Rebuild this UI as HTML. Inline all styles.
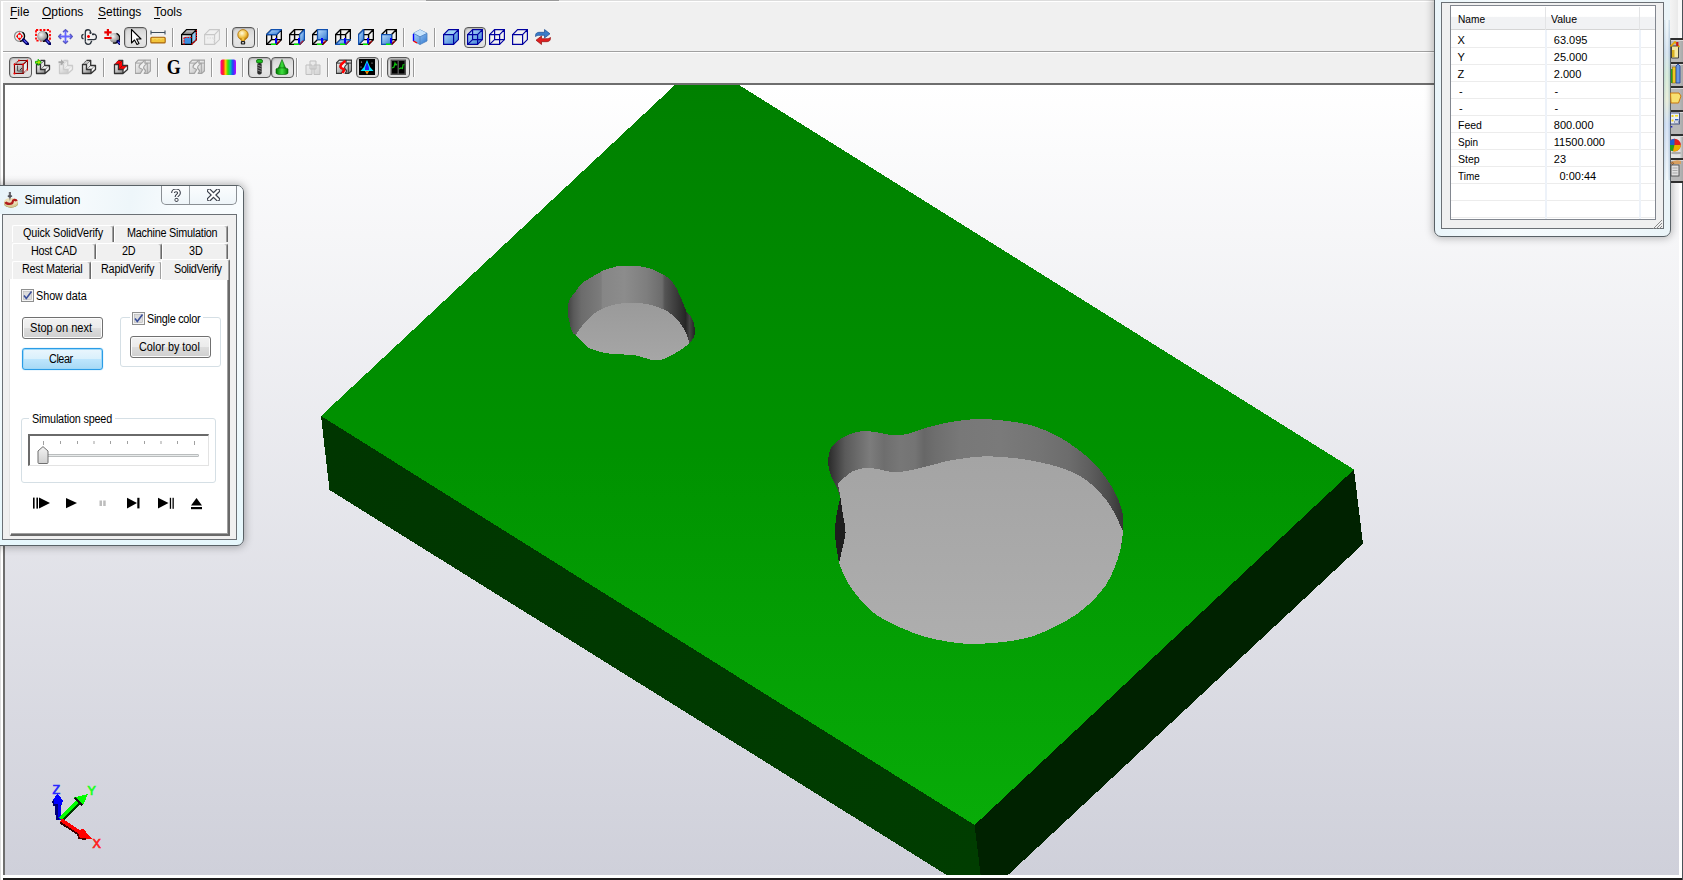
<!DOCTYPE html>
<html><head><meta charset="utf-8">
<style>
*{margin:0;padding:0;box-sizing:border-box}
html,body{width:1683px;height:880px;overflow:hidden;background:#f0f0f0;font-family:"Liberation Sans",sans-serif;color:#000;position:relative}
.a{position:absolute;display:block}
.t{position:absolute;white-space:nowrap;font-size:12px;line-height:14px}
u{text-decoration:none;border-bottom:1px solid #000;display:inline-block;line-height:11px}
</style></head><body>
<div class="a" style="left:0px;top:0px;width:1683px;height:1px;background:#dcdcdc"></div><div class="a" style="left:426px;top:0px;width:133px;height:1px;background:#9a9a9a"></div><div class="a" style="left:0px;top:0px;width:1px;height:880px;background:#dcdcdc"></div><div class="a" style="left:1px;top:1px;width:1682px;height:1px;background:#fff"></div><div class="a" style="left:1px;top:1px;width:2px;height:880px;background:#fff"></div><div class="t" style="left:10px;top:5px;font-size:12px;line-height:14px"><span style="text-decoration:underline;text-underline-offset:2px">F</span>ile</div><div class="t" style="left:42px;top:5px;font-size:12px;line-height:14px"><span style="text-decoration:underline;text-underline-offset:2px">O</span>ptions</div><div class="t" style="left:98px;top:5px;font-size:12px;line-height:14px"><span style="text-decoration:underline;text-underline-offset:2px">S</span>ettings</div><div class="t" style="left:154px;top:5px;font-size:12px;line-height:14px"><span style="text-decoration:underline;text-underline-offset:2px">T</span>ools</div><div class="a" style="left:3px;top:51px;width:1680px;height:1px;background:#a0a0a0"></div><div class="a" style="left:3px;top:52px;width:1680px;height:1px;background:#fff"></div><div class="a" style="left:3px;top:83px;width:1680px;height:797px;background:#1c1c1c">
 <div class="a" style="left:0;top:0;width:1679px;height:795px;background:#fff"></div>
 <div class="a" style="left:0;top:0;width:1676px;height:792px;background:#6e6e6e"></div>
 <div class="a" style="left:2px;top:2px;width:1674px;height:790px;background:linear-gradient(#ffffff,#cfd0da);overflow:hidden">
  <svg width="1674" height="790" viewBox="5 85 1674 790" style="position:absolute;left:0;top:0" shape-rendering="crispEdges">
   <defs>
    <linearGradient id="gt" gradientUnits="userSpaceOnUse" x1="0" y1="85" x2="0" y2="825">
     <stop offset="0" stop-color="#008000"/><stop offset="0.5" stop-color="#009200"/><stop offset="1" stop-color="#08ac08"/>
    </linearGradient>
    <linearGradient id="gl" gradientUnits="userSpaceOnUse" x1="330" y1="450" x2="980" y2="860">
     <stop offset="0" stop-color="#003600"/><stop offset="1" stop-color="#003d00"/>
    </linearGradient>
   </defs>
   <polygon points="700.7,61 1354,469.5 974.6,825 321,416" fill="url(#gt)"/>
   <polygon points="321,416 974.6,825 983.4,897.9 329.5,490" fill="url(#gl)"/>
   <polygon points="974.6,825 1354,469.5 1363,544 983.4,897.9" fill="#002200"/>
   <defs>
<linearGradient id="sw" gradientUnits="userSpaceOnUse" x1="566" y1="0" x2="696" y2="0">
 <stop offset="0" stop-color="#3c3c3c"/><stop offset="0.06" stop-color="#5a5a5a"/><stop offset="0.12" stop-color="#6c6c6c"/><stop offset="0.27" stop-color="#7c7c7c"/><stop offset="0.28" stop-color="#868686"/><stop offset="0.45" stop-color="#8c8c8c"/><stop offset="0.62" stop-color="#7e7e7e"/><stop offset="0.74" stop-color="#6c6c6c"/><stop offset="0.76" stop-color="#545454"/><stop offset="0.88" stop-color="#323232"/><stop offset="0.92" stop-color="#262626"/><stop offset="0.95" stop-color="#444"/><stop offset="1" stop-color="#1c1c1c"/>
</linearGradient>
<linearGradient id="sf" gradientUnits="userSpaceOnUse" x1="0" y1="303" x2="0" y2="360"><stop offset="0" stop-color="#9a9a9a"/><stop offset="1" stop-color="#a6a6a6"/></linearGradient>
<linearGradient id="bw" gradientUnits="userSpaceOnUse" x1="826" y1="0" x2="1124" y2="0"><stop offset="0.007" stop-color="#2a2a2a"/><stop offset="0.064" stop-color="#5a5a5a"/><stop offset="0.148" stop-color="#7c7c7c"/><stop offset="0.174" stop-color="#747474"/><stop offset="0.195" stop-color="#6e6e6e"/><stop offset="0.248" stop-color="#777777"/><stop offset="0.299" stop-color="#747474"/><stop offset="0.329" stop-color="#676767"/><stop offset="0.366" stop-color="#6e6e6e"/><stop offset="0.450" stop-color="#787878"/><stop offset="0.584" stop-color="#7a7a7a"/><stop offset="0.718" stop-color="#747474"/><stop offset="0.819" stop-color="#6c6c6c"/><stop offset="0.886" stop-color="#5e5e5e"/><stop offset="0.953" stop-color="#4a4a4a"/><stop offset="1.000" stop-color="#333333"/></linearGradient>
<linearGradient id="bf" gradientUnits="userSpaceOnUse" x1="0" y1="456" x2="0" y2="643"><stop offset="0" stop-color="#a4a4a4"/><stop offset="1" stop-color="#aeaeae"/></linearGradient>
</defs><path d="M575.5 335.2 C574.9 334.6 573.0 333.8 572.0 331.6 C571.0 329.4 570.2 325.0 569.5 322.0 C568.8 319.0 567.9 317.3 567.8 313.7 C567.7 310.1 567.7 304.2 569.0 300.6 C570.3 297.0 573.5 294.8 575.5 292.0 C577.5 289.2 578.4 286.4 581.0 284.0 C583.6 281.6 587.3 279.7 591.0 277.5 C594.7 275.3 599.2 272.4 603.0 270.7 C606.8 269.0 610.5 268.0 613.7 267.2 C616.9 266.4 616.8 266.0 622.0 266.0 C627.2 266.0 637.5 265.4 644.7 267.0 C651.9 268.6 660.0 272.5 665.0 275.5 C670.0 278.5 672.2 281.8 674.6 285.0 C677.0 288.2 677.9 291.6 679.3 294.6 C680.7 297.6 681.8 300.1 683.0 303.0 C684.2 305.9 685.9 310.5 686.5 312.0 C687.3 312.9 690.1 315.5 691.3 317.3 C692.5 319.1 693.1 321.1 693.7 323.0 C694.3 324.9 694.7 326.8 694.8 329.0 C694.9 331.2 695.1 334.0 694.2 336.4 C693.3 338.8 690.3 342.3 689.5 343.5 C687.8 344.7 683.6 348.1 679.3 350.7 C675.0 353.3 668.6 357.5 663.8 359.0 C659.0 360.5 655.3 360.2 650.7 359.6 C646.1 359.0 641.6 356.4 636.4 355.5 C631.2 354.6 624.9 354.7 619.7 354.3 C614.5 353.9 610.3 354.0 605.3 353.0 C600.3 352.0 593.4 349.9 589.8 348.3 C586.2 346.7 586.3 345.7 583.9 343.5 C581.5 341.3 576.9 336.6 575.5 335.2 Z" fill="url(#sw)"/><path d="M575.5 335.2 C577.3 332.8 581.9 325.3 586.3 320.9 C590.7 316.5 595.4 311.9 601.8 308.9 C608.1 305.9 616.6 303.8 624.4 303.0 C632.1 302.2 641.1 302.8 648.3 304.2 C655.5 305.6 662.2 308.3 667.4 311.3 C672.6 314.3 676.1 318.2 679.3 322.0 C682.5 325.8 684.8 330.4 686.5 334.0 C688.2 337.6 689.0 341.9 689.5 343.5 C687.8 344.7 683.6 348.1 679.3 350.7 C675.0 353.3 668.6 357.5 663.8 359.0 C659.0 360.5 655.3 360.2 650.7 359.6 C646.1 359.0 641.6 356.4 636.4 355.5 C631.2 354.6 624.9 354.7 619.7 354.3 C614.5 353.9 610.3 354.0 605.3 353.0 C600.3 352.0 593.4 349.9 589.8 348.3 C586.2 346.7 586.3 345.7 583.9 343.5 C581.5 341.3 576.9 336.6 575.5 335.2 Z" fill="url(#sf)"/><path d="M840.4 497.2 C839.7 495.4 838.0 489.9 836.4 486.3 C834.8 482.7 832.3 479.0 830.9 475.4 C829.5 471.8 828.7 467.2 828.2 464.5 C827.8 461.8 827.8 461.8 828.2 459.1 C828.7 456.4 829.1 451.4 830.9 448.2 C832.7 445.0 835.9 442.4 839.1 440.0 C842.3 437.6 846.4 435.4 850.0 434.0 C853.6 432.6 856.8 431.7 860.9 431.3 C865.0 430.9 870.4 431.4 874.5 431.8 C878.6 432.2 881.8 433.4 885.4 434.0 C889.0 434.6 892.2 435.5 896.3 435.4 C900.4 435.3 905.5 434.3 910.0 433.2 C914.5 432.1 918.1 430.1 923.6 428.5 C929.1 426.9 936.3 425.0 942.7 423.6 C949.1 422.2 955.0 421.2 961.8 420.4 C968.6 419.6 975.4 418.8 983.6 419.0 C991.8 419.2 1002.6 420.4 1010.8 421.5 C1019.0 422.6 1025.4 423.6 1032.7 425.8 C1040.0 428.0 1047.2 430.8 1054.5 434.5 C1061.8 438.2 1070.0 443.6 1076.3 448.2 C1082.6 452.8 1087.6 456.8 1092.6 461.8 C1097.6 466.8 1102.4 472.8 1106.3 478.2 C1110.2 483.6 1113.3 489.5 1115.8 494.5 C1118.3 499.5 1120.1 504.0 1121.3 508.1 C1122.5 512.2 1123.0 514.5 1123.2 519.0 C1123.4 523.5 1123.1 529.9 1122.6 535.4 C1122.0 540.9 1121.3 546.3 1119.9 551.8 C1118.5 557.2 1116.7 562.6 1114.4 568.1 C1112.1 573.6 1109.9 579.0 1106.3 584.5 C1102.7 590.0 1097.6 595.8 1092.6 600.8 C1087.6 605.8 1082.2 610.4 1076.3 614.5 C1070.4 618.6 1064.5 621.8 1057.2 625.4 C1049.9 629.0 1041.3 633.6 1032.7 636.3 C1024.1 639.0 1015.4 640.4 1005.4 641.7 C995.4 643.0 982.2 643.9 972.7 643.9 C963.2 643.9 956.3 643.0 948.1 641.7 C939.9 640.4 931.3 638.6 923.6 636.3 C915.9 634.0 909.1 631.3 901.8 628.1 C894.5 624.9 885.9 620.8 880.0 617.2 C874.1 613.6 870.8 610.8 866.3 606.3 C861.8 601.8 856.3 594.9 852.7 589.9 C849.1 584.9 846.8 580.8 844.5 576.3 C842.2 571.8 840.0 565.2 839.1 563.0 C838.7 560.5 837.2 553.2 836.5 548.0 C835.8 542.8 835.0 537.5 835.0 532.0 C835.0 526.5 835.6 520.8 836.5 515.0 C837.4 509.2 839.8 500.2 840.4 497.2 Z" fill="url(#bw)"/><path d="M837.7 483.6 C840.2 481.6 847.5 473.9 852.7 471.3 C857.9 468.7 863.9 467.9 869.1 467.8 C874.3 467.7 879.0 469.8 884.0 470.5 C889.0 471.2 891.6 473.0 899.1 472.2 C906.6 471.4 920.4 467.9 929.0 465.9 C937.6 463.9 940.9 462.0 950.9 460.4 C960.9 458.8 974.5 456.1 989.0 456.3 C1003.5 456.5 1023.1 458.6 1038.1 461.8 C1053.1 465.0 1067.6 469.0 1079.0 475.4 C1090.4 481.8 1099.0 490.9 1106.3 500.0 C1113.6 509.1 1119.9 525.0 1122.6 530.0 C1122.6 530.9 1123.0 531.8 1122.6 535.4 C1122.1 539.0 1121.3 546.3 1119.9 551.8 C1118.5 557.2 1116.7 562.6 1114.4 568.1 C1112.1 573.6 1109.9 579.0 1106.3 584.5 C1102.7 590.0 1097.6 595.8 1092.6 600.8 C1087.6 605.8 1082.2 610.4 1076.3 614.5 C1070.4 618.6 1064.5 621.8 1057.2 625.4 C1049.9 629.0 1041.3 633.6 1032.7 636.3 C1024.1 639.0 1015.4 640.4 1005.4 641.7 C995.4 643.0 982.2 643.9 972.7 643.9 C963.2 643.9 956.3 643.0 948.1 641.7 C939.9 640.4 931.3 638.6 923.6 636.3 C915.9 634.0 909.1 631.3 901.8 628.1 C894.5 624.9 885.9 620.8 880.0 617.2 C874.1 613.6 870.8 610.8 866.3 606.3 C861.8 601.8 856.3 594.9 852.7 589.9 C849.1 584.9 846.8 580.8 844.5 576.3 C842.2 571.8 840.0 565.2 839.1 563.0 C839.6 560.8 840.9 555.0 842.0 550.0 C843.1 545.0 845.3 538.8 845.5 533.0 C845.7 527.2 843.9 521.0 843.0 515.0 C842.1 509.0 841.3 502.4 840.4 497.2 C839.5 492.0 838.2 485.9 837.7 483.6 Z" fill="url(#bf)"/><path d="M839.1 563.0 C838.7 560.5 837.2 553.2 836.5 548.0 C835.8 542.8 835.0 537.5 835.0 532.0 C835.0 526.5 835.6 520.8 836.5 515.0 C837.4 509.2 839.8 500.2 840.4 497.2 C840.8 500.2 842.1 509.0 843.0 515.0 C843.9 521.0 845.7 527.2 845.5 533.0 C845.3 538.8 843.1 545.0 842.0 550.0 C840.9 555.0 839.6 560.8 839.1 563.0 Z" fill="#1e1e1e"/>
   <path d="M59 820 L57.5 804" stroke="#00007a" stroke-width="6"/><path d="M60.2 820 L58.8 804" stroke="#0000f0" stroke-width="3"/><path d="M57.2 793.5 L62.8 800 L62 805 L53.5 805 L52.8 800.5Z" fill="#0000ff"/><path d="M53 800.5 L53.8 805 L58 805" fill="none" stroke="#000070" stroke-width="1.8"/><path d="M61.5 820 L79.5 802" stroke="#003a00" stroke-width="4"/><path d="M60.6 818.8 L78.6 800.8" stroke="#00ff00" stroke-width="3.4"/><path d="M88 794 L83 805.5 L74.5 797.5Z" fill="#00ff00"/><path d="M75 798 L82.5 805.5" stroke="#101010" stroke-width="2.2"/><path d="M61 821.5 L80 834" stroke="#3a0000" stroke-width="4.5"/><path d="M61 820 L80 832.4" stroke="#ff0000" stroke-width="3.6"/><path d="M92 839 L77.5 838 L77.5 831.5 L83 828.5Z" fill="#ff0000"/><path d="M77.8 834 L79 838.5 L86 838.8" fill="none" stroke="#4a0000" stroke-width="1.8"/><text x="52.5" y="793.6" font-family="Liberation Sans" font-size="12.5" fill="#2828ff" stroke="#2828ff" stroke-width="0.7">Z</text><text x="87.5" y="795" font-family="Liberation Sans" font-size="12.5" fill="#20ff20" stroke="#20ff20" stroke-width="0.7">Y</text><text x="92.5" y="847.8" font-family="Liberation Sans" font-size="12.5" fill="#ff2020" stroke="#ff2020" stroke-width="0.7">X</text>
  </svg>
 </div>
</div>
<svg width="0" height="0" style="position:absolute"><defs>
<radialGradient id="lens" cx="0.35" cy="0.35" r="0.7"><stop offset="0" stop-color="#f4f4f4"/><stop offset="1" stop-color="#7a7a7a"/></radialGradient>
<linearGradient id="bl" x1="0" y1="0" x2="1" y2="1"><stop offset="0" stop-color="#bfe0ff"/><stop offset="1" stop-color="#2f78d0"/></linearGradient>
<linearGradient id="bl2" x1="0" y1="0" x2="1" y2="1"><stop offset="0" stop-color="#d8ecff"/><stop offset="1" stop-color="#5aa0e8"/></linearGradient>
<linearGradient id="gr" x1="0" y1="0" x2="1" y2="1"><stop offset="0" stop-color="#ffffff"/><stop offset="1" stop-color="#808080"/></linearGradient>
<linearGradient id="gr2" x1="0" y1="0" x2="0" y2="1"><stop offset="0" stop-color="#e8e8e8"/><stop offset="1" stop-color="#6a6a6a"/></linearGradient>
<linearGradient id="rb" x1="0" y1="0" x2="1" y2="0"><stop offset="0" stop-color="#ff00a0"/><stop offset=".18" stop-color="#ff2020"/><stop offset=".33" stop-color="#ffd000"/><stop offset=".48" stop-color="#40e000"/><stop offset=".63" stop-color="#00c8a0"/><stop offset=".8" stop-color="#2040ff"/><stop offset="1" stop-color="#c000ff"/></linearGradient>
<linearGradient id="gn" x1="0" y1="0" x2="1" y2="0"><stop offset="0" stop-color="#007a00"/><stop offset=".5" stop-color="#40e040"/><stop offset="1" stop-color="#007a00"/></linearGradient>
<radialGradient id="bulb" cx="0.4" cy="0.35" r="0.7"><stop offset="0" stop-color="#fffbe0"/><stop offset=".6" stop-color="#f0c040"/><stop offset="1" stop-color="#b06a00"/></radialGradient>
</defs></svg><svg class="a" style="left:13px;top:29px" width="16" height="16" viewBox="0 0 16 16"><circle cx="6.5" cy="7.3" r="5" fill="#e8f4f4" stroke="#8a8a8a" stroke-width="1.2"/><path d="M9.5 3.3 A5 5 0 0 1 7 12.3" fill="none" stroke="#000" stroke-width="1.3"/><path d="M6.5 3.2 L10 7.3 L6.5 11.4 L3 7.3Z" fill="#ff0000"/><rect x="5" y="5.8" width="3" height="3" fill="#d8f0f0"/><path d="M10.5 11 L14.5 15" stroke="#000060" stroke-width="3.2" stroke-linecap="round"/><path d="M10.8 11.2 L13.8 14.2" stroke="#5a5aff" stroke-width="1.2"/></svg><svg class="a" style="left:35px;top:29px" width="16" height="16" viewBox="0 0 16 16"><rect x="1" y="1" width="14" height="10.6" fill="none" stroke="#ff0000" stroke-width="1.8" stroke-dasharray="2.2,1.4"/><circle cx="7.6" cy="7.3" r="5" fill="url(#lens)" stroke="#9a9a9a" stroke-width="0.8"/><path d="M10.6 3.3 A5 5 0 0 1 8 12.3" fill="none" stroke="#000" stroke-width="1.3"/><path d="M11.3 11.2 L15 15" stroke="#000060" stroke-width="3.2" stroke-linecap="round"/><path d="M11.6 11.4 L14.3 14.1" stroke="#5a5aff" stroke-width="1.2"/></svg><svg class="a" style="left:58px;top:29px" width="16" height="16" viewBox="0 0 16 16"><path d="M7.5 1 V14 M1 7.5 H14" stroke="#6464ff" stroke-width="1.8"/><path d="M5 3 L7.5 0.8 L10 3 M5 12 L7.5 14.2 L10 12 M3 5 L0.8 7.5 L3 10 M12 5 L14.2 7.5 L12 10" fill="none" stroke="#4a4aa0" stroke-width="1.4"/><path d="M5.3 3 L7.5 1.2 L9.7 3 M5.3 12 L7.5 13.8 L9.7 12 M3 5.3 L1.2 7.5 L3 9.7 M12 5.3 L13.8 7.5 L12 9.7" fill="none" stroke="#6a6aff" stroke-width="1"/></svg><svg class="a" style="left:81px;top:29px" width="16" height="16" viewBox="0 0 16 16"><g fill="none" stroke="#2a323c" stroke-width="1.3"><path d="M2.6 5.3 C0.2 5.3 0.2 9.7 2.6 9.7"/><path d="M4.3 12.5 V3.2 C4.3 0.1 9.5 -0.2 9.5 3.2 V4.8"/><path d="M8.5 3.8 H10.5 M9.5 2.8 V4.8"/><path d="M4.3 12.5 C4.5 16.2 9.5 16.2 10.3 12.6 L11 12"/><path d="M6.4 10.6 H13 C16.2 10.6 16.2 5.2 13 5.2 H12.5"/><path d="M12 4.3 V6.3 M11 5.3 H13"/></g><path d="M6 7.5 H9 M7.5 6 V9" stroke="#ff0000" stroke-width="1.6"/></svg><svg class="a" style="left:104px;top:29px" width="16" height="16" viewBox="0 0 16 16"><circle cx="10.5" cy="9" r="5" fill="url(#lens)"/><path d="M12.5 4.4 A5 5 0 0 1 9 13.8" fill="none" stroke="#000" stroke-width="1.3"/><path d="M14 12.5 L16.5 15.2" stroke="#000060" stroke-width="3.2" stroke-linecap="round"/><path d="M14.2 12.8 L16 14.6" stroke="#5a5aff" stroke-width="1.1"/><path d="M0.3 3.4 H7.6 M3.9 0 V6.8 M0.3 9 H7.6" stroke="#e80000" stroke-width="2.2"/></svg><div class="a" style="left:124px;top:27px;width:23px;height:21px;border:1px solid #585858;border-radius:4px;background:linear-gradient(#d4d4d4,#e2e2e2 40%,#e6e6e6 60%,#dedede);box-shadow:inset 1px 1px 1px rgba(0,0,0,.15)"></div><svg class="a" style="left:128px;top:29px" width="16" height="16" viewBox="0 0 16 16"><path d="M3.5 0.5 V14 L6.5 11 L9 15.5 L11 14.5 L8.6 10 L13 10 Z" fill="#fff" stroke="#000" stroke-width="1.1" stroke-linejoin="round"/></svg><svg class="a" style="left:150px;top:29px" width="16" height="16" viewBox="0 0 16 16"><path d="M1 3.5 H15 M1 1.5 V5.5 M15 1.5 V5.5" stroke="#3c4c5c" stroke-width="1.1"/><rect x="0.8" y="8.3" width="14.4" height="5.6" rx="1" fill="#f2c43a" stroke="#a8640e" stroke-width="1.1"/><path d="M3 9 V10.5 M5 9 V10 M7 9 V10.5 M9 9 V10 M11 9 V10.5 M13 9 V10" stroke="#fff2a0" stroke-width="0.8"/></svg><div class="a" style="left:172px;top:28px;width:1px;height:19px;background:#9a9a9a"></div><div class="a" style="left:173px;top:28px;width:1px;height:19px;background:#fff"></div><svg class="a" style="left:181px;top:29px" width="16" height="16" viewBox="0 0 16 16"><path d="M0.6 5.6 L5.6 0.6 H15.4 L10.6 5.6Z" fill="url(#gr2)"/><path d="M0.6 5.6 H10.6 V15.4 H0.6Z" fill="url(#gr)"/><path d="M10.6 5.6 L15.4 0.6 V10.6 L10.6 15.4Z" fill="#8cc8f0"/><rect x="3" y="8" width="7.6" height="7.4" fill="#3c8ee0"/><path d="M0.6 5.6 H10.6 V15.4 H0.6 Z M0.6 5.6 L5.6 0.6 H15.4 V10.6 L10.6 15.4 M10.6 5.6 L15.4 0.6" fill="none" stroke="#000" stroke-width="1.3"/><path d="M3 15.4 V8.5 H10.6 M10.6 15.4 L15.4 10.6 V1" fill="none" stroke="#ff0000" stroke-width="1.2" stroke-dasharray="1.6,1"/></svg><svg class="a" style="left:204px;top:29px" width="16" height="16" viewBox="0 0 16 16"><path d="M0.6 5.6 H10.6 V15.4 H0.6 Z M0.6 5.6 L5.6 0.6 H15.4 V10.6 L10.6 15.4 M10.6 5.6 L15.4 0.6" fill="none" stroke="#c8c8c8" stroke-width="1.1"/><path d="M3 9 H10 V15" fill="none" stroke="#d8d8d8" stroke-dasharray="1.5,1"/></svg><div class="a" style="left:226px;top:28px;width:1px;height:19px;background:#9a9a9a"></div><div class="a" style="left:227px;top:28px;width:1px;height:19px;background:#fff"></div><div class="a" style="left:232px;top:27px;width:23px;height:21px;border:1px solid #585858;border-radius:4px;background:linear-gradient(#d4d4d4,#e2e2e2 40%,#e6e6e6 60%,#dedede);box-shadow:inset 1px 1px 1px rgba(0,0,0,.15)"></div><svg class="a" style="left:235px;top:29px" width="16" height="16" viewBox="0 0 16 16"><circle cx="8" cy="5.8" r="5.2" fill="url(#bulb)" stroke="#b8780a" stroke-width="0.9"/><path d="M6 9 L6.5 12 H9.5 L10 9" fill="#f0c040" stroke="#b8780a" stroke-width="0.8"/><rect x="5.8" y="12" width="4.4" height="3.6" rx="1" fill="#222"/><path d="M7 13.8 H9" stroke="#fff" stroke-width="1"/></svg><div class="a" style="left:257px;top:28px;width:1px;height:19px;background:#9a9a9a"></div><div class="a" style="left:258px;top:28px;width:1px;height:19px;background:#fff"></div><svg class="a" style="left:266px;top:29px" width="16" height="16" viewBox="0 0 16 16"><path d="M0.6 5.6 H10.6 V15.4 H0.6 Z M0.6 5.6 L5.6 0.6 H15.4 V10.6 L10.6 15.4 M10.6 5.6 L15.4 0.6" fill="none" stroke="#000" stroke-width="1.4"/><path d="M5.6 0.6 V10.6 H15.4 M5.6 10.6 L0.6 15.4" fill="none" stroke="#000" stroke-width="1.4"/><path d="M0.6 5.6 L5.6 0.6 H15.4 L10.6 5.6Z" fill="url(#bl)" stroke="#1050b0" stroke-width="1.2"/><path d="M10 9 V15" stroke="#0000ff" stroke-width="2"/><path d="M5 15.3 H10" stroke="#00f000" stroke-width="1.5"/><path d="M10.6 15.3 L14.2 11.7" stroke="#ff0000" stroke-width="1.3" stroke-dasharray="1,0.6"/></svg><svg class="a" style="left:289px;top:29px" width="16" height="16" viewBox="0 0 16 16"><path d="M0.6 5.6 H10.6 V15.4 H0.6 Z M0.6 5.6 L5.6 0.6 H15.4 V10.6 L10.6 15.4 M10.6 5.6 L15.4 0.6" fill="none" stroke="#000" stroke-width="1.4"/><path d="M5.6 0.6 V10.6 H15.4 M5.6 10.6 L0.6 15.4" fill="none" stroke="#000" stroke-width="1.4"/><path d="M10.6 5.6 L15.4 0.6 V10.6 L10.6 15.4Z" fill="url(#bl)" stroke="#1050b0" stroke-width="1.2"/><path d="M10 9 V15" stroke="#0000ff" stroke-width="2"/><path d="M5 15.3 H10" stroke="#00f000" stroke-width="1.5"/><path d="M10.6 15.3 L14.2 11.7" stroke="#ff0000" stroke-width="1.3" stroke-dasharray="1,0.6"/></svg><svg class="a" style="left:312px;top:29px" width="16" height="16" viewBox="0 0 16 16"><path d="M0.6 5.6 H10.6 V15.4 H0.6 Z M0.6 5.6 L5.6 0.6 H15.4 V10.6 L10.6 15.4 M10.6 5.6 L15.4 0.6" fill="none" stroke="#000" stroke-width="1.4"/><path d="M5.6 0.6 V10.6 H15.4 M5.6 10.6 L0.6 15.4" fill="none" stroke="#000" stroke-width="1.4"/><path d="M5.6 0.6 H15.4 V10.6 H5.6Z" fill="url(#bl)" stroke="#1050b0" stroke-width="1.2"/><path d="M10 9 V15" stroke="#0000ff" stroke-width="2"/><path d="M5 15.3 H10" stroke="#00f000" stroke-width="1.5"/><path d="M10.6 15.3 L14.2 11.7" stroke="#ff0000" stroke-width="1.3" stroke-dasharray="1,0.6"/></svg><svg class="a" style="left:335px;top:29px" width="16" height="16" viewBox="0 0 16 16"><path d="M0.6 5.6 H10.6 V15.4 H0.6 Z M0.6 5.6 L5.6 0.6 H15.4 V10.6 L10.6 15.4 M10.6 5.6 L15.4 0.6" fill="none" stroke="#000" stroke-width="1.4"/><path d="M5.6 0.6 V10.6 H15.4 M5.6 10.6 L0.6 15.4" fill="none" stroke="#000" stroke-width="1.4"/><path d="M0.6 15.4 L5.6 10.6 H15.4 L10.6 15.4Z" fill="url(#bl)" stroke="#1050b0" stroke-width="1.2"/><path d="M10 9 V15" stroke="#0000ff" stroke-width="2"/><path d="M5 15.3 H10" stroke="#00f000" stroke-width="1.5"/><path d="M10.6 15.3 L14.2 11.7" stroke="#ff0000" stroke-width="1.3" stroke-dasharray="1,0.6"/></svg><svg class="a" style="left:358px;top:29px" width="16" height="16" viewBox="0 0 16 16"><path d="M0.6 5.6 H10.6 V15.4 H0.6 Z M0.6 5.6 L5.6 0.6 H15.4 V10.6 L10.6 15.4 M10.6 5.6 L15.4 0.6" fill="none" stroke="#000" stroke-width="1.4"/><path d="M5.6 0.6 V10.6 H15.4 M5.6 10.6 L0.6 15.4" fill="none" stroke="#000" stroke-width="1.4"/><path d="M0.6 5.6 L5.6 0.6 V10.6 L0.6 15.4Z" fill="url(#bl)" stroke="#1050b0" stroke-width="1.2"/><path d="M10 9 V15" stroke="#0000ff" stroke-width="2"/><path d="M5 15.3 H10" stroke="#00f000" stroke-width="1.5"/><path d="M10.6 15.3 L14.2 11.7" stroke="#ff0000" stroke-width="1.3" stroke-dasharray="1,0.6"/></svg><svg class="a" style="left:381px;top:29px" width="16" height="16" viewBox="0 0 16 16"><path d="M0.6 5.6 H10.6 V15.4 H0.6 Z M0.6 5.6 L5.6 0.6 H15.4 V10.6 L10.6 15.4 M10.6 5.6 L15.4 0.6" fill="none" stroke="#000" stroke-width="1.4"/><path d="M5.6 0.6 V10.6 H15.4 M5.6 10.6 L0.6 15.4" fill="none" stroke="#000" stroke-width="1.4"/><path d="M0.6 5.6 H10.6 V15.4 H0.6Z" fill="url(#bl)" stroke="#1050b0" stroke-width="1.2"/><path d="M10 9 V15" stroke="#0000ff" stroke-width="2"/><path d="M5 15.3 H10" stroke="#00f000" stroke-width="1.5"/><path d="M10.6 15.3 L14.2 11.7" stroke="#ff0000" stroke-width="1.3" stroke-dasharray="1,0.6"/></svg><div class="a" style="left:403px;top:28px;width:1px;height:19px;background:#9a9a9a"></div><div class="a" style="left:404px;top:28px;width:1px;height:19px;background:#fff"></div><svg class="a" style="left:412px;top:29px" width="16" height="16" viewBox="0 0 16 16"><path d="M8 0.8 L15 4.3 V12 L8 15.5 L1.5 12 V4.3Z" fill="url(#bl)" stroke="#4a80c0" stroke-width="0.8"/><path d="M1.5 4.3 L8 0.8 L15 4.3 L8 7.8Z" fill="#c8e4fc"/><path d="M1.5 4.3 L8 7.8 L15 4.3 M8 7.8 V15.5" fill="none" stroke="#4a80c0" stroke-width="0.8"/><path d="M1.5 5 V12" stroke="#0000ff" stroke-width="1.4"/><path d="M1.5 12 L5 14" stroke="#ff0000" stroke-width="1.4"/></svg><div class="a" style="left:434px;top:28px;width:1px;height:19px;background:#9a9a9a"></div><div class="a" style="left:435px;top:28px;width:1px;height:19px;background:#fff"></div><svg class="a" style="left:443px;top:29px" width="16" height="16" viewBox="0 0 16 16"><path d="M0.6 5.6 L5.6 0.6 H15.4 V10.6 L10.6 15.4 H0.6Z" fill="url(#bl)"/><path d="M0.6 5.6 L5.6 0.6 H15.4 L10.6 5.6Z" fill="#9ccff4"/><path d="M0.6 5.6 H10.6 V15.4 H0.6 Z M0.6 5.6 L5.6 0.6 H15.4 V10.6 L10.6 15.4 M10.6 5.6 L15.4 0.6" fill="none" stroke="#0000a0" stroke-width="1.2"/></svg><div class="a" style="left:464px;top:27px;width:22px;height:21px;border:1px solid #585858;border-radius:4px;background:linear-gradient(#d4d4d4,#e2e2e2 40%,#e6e6e6 60%,#dedede);box-shadow:inset 1px 1px 1px rgba(0,0,0,.15)"></div><svg class="a" style="left:467px;top:29px" width="16" height="16" viewBox="0 0 16 16"><path d="M0.6 5.6 L5.6 0.6 H15.4 V10.6 L10.6 15.4 H0.6Z" fill="url(#bl)"/><path d="M0.6 5.6 H10.6 V15.4 H0.6 Z M0.6 5.6 L5.6 0.6 H15.4 V10.6 L10.6 15.4 M10.6 5.6 L15.4 0.6" fill="none" stroke="#0000a0" stroke-width="1.2"/><path d="M5.6 0.6 V10.6 H15.4 M5.6 10.6 L0.6 15.4" fill="none" stroke="#0000a0" stroke-width="1.2"/></svg><svg class="a" style="left:489px;top:29px" width="16" height="16" viewBox="0 0 16 16"><path d="M0.6 5.6 H10.6 V15.4 H0.6 Z M0.6 5.6 L5.6 0.6 H15.4 V10.6 L10.6 15.4 M10.6 5.6 L15.4 0.6" fill="none" stroke="#0000a0" stroke-width="1.2"/><path d="M5.6 0.6 V10.6 H15.4 M5.6 10.6 L0.6 15.4" fill="none" stroke="#0000a0" stroke-width="1.2"/></svg><svg class="a" style="left:512px;top:29px" width="16" height="16" viewBox="0 0 16 16"><path d="M0.6 5.6 H10.6 V15.4 H0.6 Z M0.6 5.6 L5.6 0.6 H15.4 V10.6 L10.6 15.4 M10.6 5.6 L15.4 0.6" fill="none" stroke="#0000a0" stroke-width="1.2"/></svg><svg class="a" style="left:535px;top:29px" width="16" height="16" viewBox="0 0 16 16"><path d="M0.5 7.5 C0.5 4 2 3.3 5 3.3 H9.5 V0.5 L15 4.8 L9.5 9 V6.3 H5 C3 6.3 2 6.5 0.5 7.5Z" fill="#3a7cc8" stroke="#1a4a90" stroke-width="0.7"/><path d="M15.5 8.5 C15.5 12 14 12.7 11 12.7 H6.5 V15.5 L1 11.2 L6.5 7 V9.7 H11 C13 9.7 14 9.5 15.5 8.5Z" fill="#e02020" stroke="#901010" stroke-width="0.7"/></svg><div class="a" style="left:9px;top:57px;width:23px;height:21px;border:1px solid #585858;border-radius:4px;background:linear-gradient(#d4d4d4,#e2e2e2 40%,#e6e6e6 60%,#dedede);box-shadow:inset 1px 1px 1px rgba(0,0,0,.15)"></div><svg class="a" style="left:12px;top:59px" width="16" height="16" viewBox="0 0 16 16"><path d="M2.5 5.4 H11.1 V14.5 H2.5Z" fill="url(#gr)"/><path d="M2.5 5.4 L6.9 1.5 H15.5 L11.1 5.4Z" fill="#c8cccc"/><path d="M11.1 5.4 L15.5 1.5 V10.5 L11.1 14.5Z" fill="#e8f0f0"/><path d="M5.5 12 V6.5 M5.5 12 H10.5" stroke="#555" stroke-width="1.2"/><path d="M8 11 L10 9" stroke="#333" stroke-width="1"/><path d="M2.5 5.4 H11.1 V14.5 H2.5Z M6.9 1.5 H15.5 V10.5 M11.1 5.4 L15.5 1.5" fill="none" stroke="#800000" stroke-width="1.2"/><path d="M2.5 5.4 L6.9 1.5 M11.1 14.5 L15.5 10.5" fill="none" stroke="#800000" stroke-width="1.1" stroke-dasharray="1,0.7"/><g fill="#ff0000"><circle cx="2.5" cy="5.4" r="0.9"/><circle cx="6.9" cy="1.5" r="0.9"/><circle cx="15.5" cy="1.5" r="0.9"/><circle cx="11.1" cy="5.4" r="0.9"/><circle cx="15.5" cy="10.5" r="0.9"/><circle cx="2.5" cy="14.5" r="1.1"/></g></svg><svg class="a" style="left:35px;top:59px" width="16" height="16" viewBox="0 0 16 16"><path d="M1.5 5.5 L5.5 1.3 H9.7 V6.5 H14.5 V10.5 L10 14.5 H1.5Z" fill="#f4f4f4"/><path d="M1.5 5.5 H5.5 V10.5 H10 V14.5 H1.5Z" fill="url(#gr)"/><path d="M5.5 5.5 L9.7 1.3 V6.5 L5.5 10.5Z" fill="#e6e6e6"/><path d="M1.5 5.5 L5.5 1.3 H9.7 L5.5 5.5Z" fill="#c4c4c4"/><path d="M1.5 5.5 H5.5 V10.5 H10 V14.5 H1.5Z M5.5 1.3 H9.7 V6.5 H14.5 V10.5 L10 14.5" fill="none" stroke="#333" stroke-width="1.3" stroke-linejoin="round"/><path d="M1.5 5.5 L5.5 1.3 M5.5 5.5 L9.7 1.3 M5.5 10.5 L9.7 6.5 M10 10.5 L14.5 6.5" fill="none" stroke="#333" stroke-width="1" stroke-dasharray="1,0.8"/><path d="M0.5 2.3 H3 V0.3 L6.3 3.3 L3 6.3 V4.3 H0.5Z" fill="#b8e000" stroke="#00b000" stroke-width="0.9"/></svg><svg class="a" style="left:58px;top:59px" width="16" height="16" viewBox="0 0 16 16"><g opacity="0.35"><path d="M1.5 5.5 L5.5 1.3 H9.7 V6.5 H14.5 V10.5 L10 14.5 H1.5Z" fill="#f4f4f4"/><path d="M1.5 5.5 H5.5 V10.5 H10 V14.5 H1.5Z" fill="url(#gr)"/><path d="M5.5 5.5 L9.7 1.3 V6.5 L5.5 10.5Z" fill="#e6e6e6"/><path d="M1.5 5.5 L5.5 1.3 H9.7 L5.5 5.5Z" fill="#c4c4c4"/><path d="M1.5 5.5 H5.5 V10.5 H10 V14.5 H1.5Z M5.5 1.3 H9.7 V6.5 H14.5 V10.5 L10 14.5" fill="none" stroke="#888" stroke-width="1.3" stroke-linejoin="round"/><path d="M1.5 5.5 L5.5 1.3 M5.5 5.5 L9.7 1.3 M5.5 10.5 L9.7 6.5 M10 10.5 L14.5 6.5" fill="none" stroke="#999" stroke-width="1" stroke-dasharray="1,0.8"/></g><path d="M0.5 2.3 H3 V0.3 L6.3 3.3 L3 6.3 V4.3 H0.5Z" fill="#a8a8a8"/></svg><svg class="a" style="left:81px;top:59px" width="16" height="16" viewBox="0 0 16 16"><path d="M1.5 5.5 L5.5 1.3 H9.7 V6.5 H14.5 V10.5 L10 14.5 H1.5Z" fill="#f4f4f4"/><path d="M1.5 5.5 H5.5 V10.5 H10 V14.5 H1.5Z" fill="url(#gr)"/><path d="M5.5 5.5 L9.7 1.3 V6.5 L5.5 10.5Z" fill="#e6e6e6"/><path d="M1.5 5.5 L5.5 1.3 H9.7 L5.5 5.5Z" fill="#c4c4c4"/><path d="M1.5 5.5 H5.5 V10.5 H10 V14.5 H1.5Z M5.5 1.3 H9.7 V6.5 H14.5 V10.5 L10 14.5" fill="none" stroke="#333" stroke-width="1.3" stroke-linejoin="round"/><path d="M1.5 5.5 L5.5 1.3 M5.5 5.5 L9.7 1.3 M5.5 10.5 L9.7 6.5 M10 10.5 L14.5 6.5" fill="none" stroke="#333" stroke-width="1" stroke-dasharray="1,0.8"/></svg><div class="a" style="left:103px;top:58px;width:1px;height:19px;background:#9a9a9a"></div><div class="a" style="left:104px;top:58px;width:1px;height:19px;background:#fff"></div><svg class="a" style="left:113px;top:59px" width="16" height="16" viewBox="0 0 16 16"><path d="M1.5 5.5 L5.5 1.3 H9.7 V6.5 H14.5 V10.5 L10 14.5 H1.5Z" fill="#f4f4f4"/><path d="M1.5 5.5 H5.5 V10.5 H10 V14.5 H1.5Z" fill="url(#gr)"/><path d="M5.5 5.5 L9.7 1.3 V6.5 L5.5 10.5Z" fill="#e6e6e6"/><path d="M1.5 5.5 L5.5 1.3 H9.7 L5.5 5.5Z" fill="#c4c4c4"/><path d="M1.5 5.5 L5.5 1.3 H9.7 L5.5 5.5Z M5.5 5.5 L9.7 1.3 V6.5 L5.5 10.5Z M5.5 10.5 L9.7 6.5 H14.5 L10 10.5Z" fill="#ff0000"/><path d="M1.5 5.5 H5.5 V10.5 H10 V14.5 H1.5Z M5.5 1.3 H9.7 V6.5 H14.5 V10.5 L10 14.5" fill="none" stroke="#333" stroke-width="1.3" stroke-linejoin="round"/><path d="M1.5 5.5 L5.5 1.3 M5.5 5.5 L9.7 1.3 M5.5 10.5 L9.7 6.5 M10 10.5 L14.5 6.5" fill="none" stroke="#700" stroke-width="1" stroke-dasharray="1,0.8"/></svg><svg class="a" style="left:135px;top:59px" width="16" height="16" viewBox="0 0 16 16"><g opacity="0.4"><path d="M0.3 4.1 L3.2 1.1 H9.8 L7.2 3.8 C5 5.5 3.5 6.5 4.2 8.5 C5 9.8 7.5 9.8 7.6 10.8 L5.3 14.4 H0.3 Z" fill="url(#gr)" stroke="#333" stroke-width="1.2" stroke-linejoin="round"/><path d="M10.3 1.1 H15.7 V11.6 L12.8 14.4 H9.2 L10.5 12.2 C10.8 11 8.8 10.2 8.6 8.8 C8.5 7.5 9.6 6.4 10.6 5.6 L12.3 4.1 H9.8Z" fill="url(#gr)" stroke="#333" stroke-width="1.2" stroke-linejoin="round"/><path d="M12.3 4.1 H15.7 M12.3 4.1 V14.4 M0.3 4.1 H6.5" fill="none" stroke="#333" stroke-width="1"/></g></svg><div class="a" style="left:157px;top:58px;width:1px;height:19px;background:#9a9a9a"></div><div class="a" style="left:158px;top:58px;width:1px;height:19px;background:#fff"></div><div class="t" style="left:166px;top:57px;font-family:'Liberation Serif',serif;font-size:20px;line-height:20px;font-weight:bold;transform:scaleX(0.9)">G</div><svg class="a" style="left:189px;top:59px" width="16" height="16" viewBox="0 0 16 16"><g opacity="0.4"><path d="M0.3 4.1 L3.2 1.1 H9.8 L7.2 3.8 C5 5.5 3.5 6.5 4.2 8.5 C5 9.8 7.5 9.8 7.6 10.8 L5.3 14.4 H0.3 Z" fill="url(#gr)" stroke="#333" stroke-width="1.2" stroke-linejoin="round"/><path d="M10.3 1.1 H15.7 V11.6 L12.8 14.4 H9.2 L10.5 12.2 C10.8 11 8.8 10.2 8.6 8.8 C8.5 7.5 9.6 6.4 10.6 5.6 L12.3 4.1 H9.8Z" fill="url(#gr)" stroke="#333" stroke-width="1.2" stroke-linejoin="round"/><path d="M12.3 4.1 H15.7 M12.3 4.1 V14.4 M0.3 4.1 H6.5" fill="none" stroke="#333" stroke-width="1"/></g></svg><div class="a" style="left:211px;top:58px;width:1px;height:19px;background:#9a9a9a"></div><div class="a" style="left:212px;top:58px;width:1px;height:19px;background:#fff"></div><svg class="a" style="left:220px;top:59px" width="16" height="16" viewBox="0 0 16 16"><rect x="0.5" y="0.5" width="15.5" height="15.5" rx="2" fill="url(#rb)"/></svg><div class="a" style="left:242px;top:58px;width:1px;height:19px;background:#9a9a9a"></div><div class="a" style="left:243px;top:58px;width:1px;height:19px;background:#fff"></div><div class="a" style="left:248px;top:57px;width:23px;height:21px;border:1px solid #585858;border-radius:4px;background:linear-gradient(#d4d4d4,#e2e2e2 40%,#e6e6e6 60%,#dedede);box-shadow:inset 1px 1px 1px rgba(0,0,0,.15)"></div><div class="a" style="left:271px;top:57px;width:23px;height:21px;border:1px solid #585858;border-radius:4px;background:linear-gradient(#d4d4d4,#e2e2e2 40%,#e6e6e6 60%,#dedede);box-shadow:inset 1px 1px 1px rgba(0,0,0,.15)"></div><svg class="a" style="left:251px;top:59px" width="16" height="16" viewBox="0 0 16 16"><rect x="5.5" y="0.5" width="6" height="3.5" rx="1.5" fill="#20c020" stroke="#006000" stroke-width="0.8"/><rect x="6.3" y="4" width="4.4" height="11.5" rx="1.8" fill="#2a2a2a"/><path d="M6.5 6 L10.5 7.5 M6.5 8.5 L10.5 10 M6.5 11 L10.5 12.5" stroke="#999" stroke-width="0.8"/></svg><svg class="a" style="left:274px;top:59px" width="16" height="16" viewBox="0 0 16 16"><path d="M8 0.5 L12 10 H4Z" fill="url(#gn)" stroke="#006000" stroke-width="0.6"/><path d="M2 10 C2 8.5 14 8.5 14 10 V14 C14 16.2 2 16.2 2 14Z" fill="url(#gn)" stroke="#006000" stroke-width="0.6"/></svg><div class="a" style="left:296px;top:58px;width:1px;height:19px;background:#9a9a9a"></div><div class="a" style="left:297px;top:58px;width:1px;height:19px;background:#fff"></div><svg class="a" style="left:305px;top:59px" width="16" height="16" viewBox="0 0 16 16"><g opacity="0.25"><path d="M1 6 H7 V15.5 H1Z M5 2 H11 V10 H5Z M9 6 H15 V15.5 H9Z" fill="url(#gr)" stroke="#333" stroke-width="1"/></g></svg><div class="a" style="left:327px;top:58px;width:1px;height:19px;background:#9a9a9a"></div><div class="a" style="left:328px;top:58px;width:1px;height:19px;background:#fff"></div><svg class="a" style="left:336px;top:59px" width="16" height="16" viewBox="0 0 16 16"><path d="M0.3 4.1 L3.2 1.1 H9.8 L7.2 3.8 C5 5.5 3.5 6.5 4.2 8.5 C5 9.8 7.5 9.8 7.6 10.8 L5.3 14.4 H0.3 Z" fill="url(#gr)" stroke="#333" stroke-width="1.2" stroke-linejoin="round"/><path d="M10.3 1.1 H15.7 V11.6 L12.8 14.4 H9.2 L10.5 12.2 C10.8 11 8.8 10.2 8.6 8.8 C8.5 7.5 9.6 6.4 10.6 5.6 L12.3 4.1 H9.8Z" fill="url(#gr)" stroke="#333" stroke-width="1.2" stroke-linejoin="round"/><path d="M12.3 4.1 H15.7 M12.3 4.1 V14.4 M0.3 4.1 H6.5" fill="none" stroke="#333" stroke-width="1"/><path d="M9.5 1.8 L6.5 4.2 C4.5 5.8 4 7.5 5 8.8 C6 9.8 8.5 10 8.2 11.2 L6.5 14" fill="none" stroke="#ff0000" stroke-width="2.4"/></svg><div class="a" style="left:356px;top:57px;width:23px;height:21px;border:1px solid #585858;border-radius:4px;background:linear-gradient(#d4d4d4,#e2e2e2 40%,#e6e6e6 60%,#dedede);box-shadow:inset 1px 1px 1px rgba(0,0,0,.15)"></div><svg class="a" style="left:359px;top:59px" width="16" height="16" viewBox="0 0 16 16"><rect x="0" y="0" width="16" height="16" fill="#000"/><path d="M8 1 L11 8 L14.5 12 H1.5 L5 8Z" fill="#00e8ff"/><path d="M8 3 L10 8.5 V11 H6 V8.5Z" fill="#2020ff"/><path d="M6 12 L8 15.5 L10 12Z" fill="#ffc000"/><path d="M7 12 L8 14 L9 12Z" fill="#ff2000"/><circle cx="2.5" cy="3" r="0.6" fill="#ddd"/><circle cx="13" cy="4" r="0.6" fill="#ddd"/><circle cx="2" cy="8" r="0.5" fill="#ddd"/></svg><div class="a" style="left:381px;top:58px;width:1px;height:19px;background:#9a9a9a"></div><div class="a" style="left:382px;top:58px;width:1px;height:19px;background:#fff"></div><div class="a" style="left:387px;top:57px;width:23px;height:21px;border:1px solid #585858;border-radius:4px;background:linear-gradient(#d4d4d4,#e2e2e2 40%,#e6e6e6 60%,#dedede);box-shadow:inset 1px 1px 1px rgba(0,0,0,.15)"></div><svg class="a" style="left:390px;top:59px" width="16" height="16" viewBox="0 0 16 16"><rect x="0.5" y="0.5" width="15.5" height="15.5" fill="#505050"/><rect x="2" y="2" width="5.5" height="12.5" fill="#000"/><rect x="9" y="2" width="5.5" height="12.5" fill="#000"/><path d="M2 9 L4 8 L5 4 L6 6 L7 5 M9 10 L11 9 L12.5 9.5 L13 6 L14.5 5.5" fill="none" stroke="#10c010" stroke-width="1.2"/></svg><div class="a" style="left:413px;top:58px;width:1px;height:19px;background:#9a9a9a"></div><div class="a" style="left:414px;top:58px;width:1px;height:19px;background:#fff"></div><div class="a" style="left:-8px;top:185px;width:252px;height:361px;border:1px solid #596166;border-radius:7px;background:linear-gradient(180deg,#f8fcfe 0%,#f5fbfd 45%,#e6f7fc 100%);box-shadow:0 0 9px 1px rgba(0,0,0,0.30)"></div><div class="a" style="left:-7px;top:186px;width:250px;height:28px;border-radius:6px 6px 0 0;background:linear-gradient(100deg,#e6f3f9 0%,#f7fbfd 30%,#eef6fa 55%,#f8fcfe 75%,#f8fcfe 100%)"></div><svg class="a" style="left:3px;top:191px" width="16" height="18" viewBox="0 0 16 18"><path d="M1.2 10.5 V13 A6.8 3.7 0 0 0 14.8 13 V10.5Z" fill="#a89860"/><ellipse cx="8" cy="13" rx="6.8" ry="3.4" fill="#b8a868"/><path d="M1.2 10.5 V12.5 A6.8 3.4 0 0 0 14.8 12.5 V10.5Z" fill="#d8cc98"/><ellipse cx="8" cy="10.5" rx="6.8" ry="3.6" fill="#eadfb8"/><path d="M2.6 11 C3.5 13.5 9.5 13.6 9.6 11 C9.7 8.6 13 8.3 13.6 10.2" fill="none" stroke="#b01c1c" stroke-width="2.3"/><rect x="5.8" y="1" width="2.2" height="6" fill="#6a6a70"/><rect x="4.6" y="4.2" width="4.6" height="1.8" rx="0.8" fill="#505058"/><path d="M6.2 7 L6.9 10 L7.6 7Z" fill="#707078"/></svg><div class="t" style="left:24.5px;top:193.84px;font-size:12px;line-height:12px;color:#000;">Simulation</div><div class="a" style="left:161px;top:186px;width:76px;height:19px;border:1px solid #8a8f94;border-top:none;border-radius:0 0 5px 5px;background:linear-gradient(#fbfdfe,#eef5f9)"></div><div class="a" style="left:189px;top:186px;width:1px;height:18px;background:#9aa0a5"></div><svg class="a" style="left:170px;top:189px" width="12" height="13" viewBox="0 0 12 13"><path d="M3 4 C3 0.5 9 0.5 9 4 C9 6 6.5 6.2 6.5 8" fill="none" stroke="#3a3f4a" stroke-width="3.8"/><path d="M3 4 C3 0.5 9 0.5 9 4 C9 6 6.5 6.2 6.5 8" fill="none" stroke="#fff" stroke-width="1.6"/><rect x="5" y="9.4" width="3" height="3" rx="1" fill="#fff" stroke="#3a3f4a" stroke-width="1"/></svg><svg class="a" style="left:207px;top:189px" width="13" height="12" viewBox="0 0 13 12"><path d="M2.2 1.8 L10.8 10.2 M10.8 1.8 L2.2 10.2" stroke="#3a3f4a" stroke-width="4.6" stroke-linecap="square"/><path d="M2.2 1.8 L10.8 10.2 M10.8 1.8 L2.2 10.2" stroke="#fff" stroke-width="2.2" stroke-linecap="square"/></svg><div class="a" style="left:2px;top:214px;width:235px;height:326px;background:#f0f0f0;border:1px solid #6b7075"></div><div class="a" style="left:12px;top:225px;width:102px;height:17px;background:#f0f0f0;border-left:1px solid #fff;border-top:1px solid #fff;border-right:1px solid #696969;box-shadow:inset -1px 0 0 #a0a0a0;border-top-left-radius:2px;border-top-right-radius:3px"></div><div class="t" style="left:22.80px;top:226.84px;font-size:12px;line-height:12px;color:#000;letter-spacing:-0.107px;transform:scaleX(0.9000);transform-origin:0 0">Quick SolidVerify</div><div class="a" style="left:114px;top:225px;width:114px;height:17px;background:#f0f0f0;border-left:1px solid #fff;border-top:1px solid #fff;border-right:1px solid #696969;box-shadow:inset -1px 0 0 #a0a0a0;border-top-left-radius:2px;border-top-right-radius:3px"></div><div class="t" style="left:126.90px;top:226.84px;font-size:12px;line-height:12px;color:#000;letter-spacing:-0.237px;transform:scaleX(0.9000);transform-origin:0 0">Machine Simulation</div><div class="a" style="left:12px;top:243px;width:84px;height:16px;background:#f0f0f0;border-left:1px solid #fff;border-top:1px solid #fff;border-right:1px solid #696969;box-shadow:inset -1px 0 0 #a0a0a0;border-top-left-radius:2px;border-top-right-radius:3px"></div><div class="t" style="left:30.70px;top:244.84px;font-size:12px;line-height:12px;color:#000;letter-spacing:-0.321px;transform:scaleX(0.9000);transform-origin:0 0">Host CAD</div><div class="a" style="left:96px;top:243px;width:66px;height:16px;background:#f0f0f0;border-left:1px solid #fff;border-top:1px solid #fff;border-right:1px solid #696969;box-shadow:inset -1px 0 0 #a0a0a0;border-top-left-radius:2px;border-top-right-radius:3px"></div><div class="t" style="left:122.10px;top:244.84px;font-size:12px;line-height:12px;color:#000;letter-spacing:-0.170px;transform:scaleX(0.9000);transform-origin:0 0">2D</div><div class="a" style="left:162px;top:243px;width:66px;height:16px;background:#f0f0f0;border-left:1px solid #fff;border-top:1px solid #fff;border-right:1px solid #696969;box-shadow:inset -1px 0 0 #a0a0a0;border-top-left-radius:2px;border-top-right-radius:3px"></div><div class="t" style="left:188.70px;top:244.84px;font-size:12px;line-height:12px;color:#000;letter-spacing:-0.059px;transform:scaleX(0.9000);transform-origin:0 0">3D</div><div class="a" style="left:10px;top:279px;width:220px;height:257px;background:#fff;border-left:1px solid #fff;border-top:1px solid #fff;border-right:2px solid #696969;border-bottom:2px solid #696969;box-shadow:inset -1px -1px 0 #a0a0a0, -1px 0 0 #e3e3e3"></div><div class="a" style="left:12px;top:261px;width:79px;height:18px;background:#f0f0f0;border-left:1px solid #fff;border-top:1px solid #fff;border-right:1px solid #696969;box-shadow:inset -1px 0 0 #a0a0a0;border-top-left-radius:2px;border-top-right-radius:3px"></div><div class="t" style="left:22.00px;top:262.84px;font-size:12px;line-height:12px;color:#000;letter-spacing:-0.275px;transform:scaleX(0.9000);transform-origin:0 0">Rest Material</div><div class="a" style="left:91px;top:261px;width:71px;height:18px;background:#f0f0f0;border-left:1px solid #fff;border-top:1px solid #fff;border-right:1px solid #696969;box-shadow:inset -1px 0 0 #a0a0a0;border-top-left-radius:2px;border-top-right-radius:3px"></div><div class="t" style="left:100.60px;top:262.84px;font-size:12px;line-height:12px;color:#000;letter-spacing:-0.195px;transform:scaleX(0.9000);transform-origin:0 0">RapidVerify</div><div class="a" style="left:161px;top:259px;width:69px;height:21px;background:#f0f0f0;border-left:1px solid #fff;border-top:1px solid #fff;border-right:1px solid #696969;box-shadow:inset -1px 0 0 #a0a0a0;border-top-left-radius:2px;border-top-right-radius:2px"></div><div class="t" style="left:173.60px;top:262.84px;font-size:12px;line-height:12px;color:#000;letter-spacing:-0.336px;transform:scaleX(0.9000);transform-origin:0 0">SolidVerify</div><svg class="a" style="left:21px;top:289px" width="13" height="13" viewBox="0 0 13 13"><rect x="0.5" y="0.5" width="12" height="12" fill="#f4f4f4" stroke="#8e8f8f"/><rect x="2.5" y="2.5" width="8" height="8" fill="#dcdcdc" stroke="#b4b4b4" stroke-width="0.6"/><path d="M3 6.5 L5.3 9.5 L10.5 2.5" fill="none" stroke="#3a4f9a" stroke-width="1.6"/></svg><div class="t" style="left:35.80px;top:289.84px;font-size:12px;line-height:12px;color:#000;letter-spacing:-0.042px;transform:scaleX(0.9000);transform-origin:0 0">Show data</div><div class="a" style="left:22px;top:317px;width:81px;height:22px;border:1px solid #707070;border-radius:3px;background:linear-gradient(#f2f2f2,#ebebeb 50%,#dddddd 50%,#cfcfcf);box-shadow:inset 0 0 0 1px #fcfcfc"></div><div class="t" style="left:29.80px;top:321.84px;font-size:12px;line-height:12px;color:#000;letter-spacing:0.000px;transform:scaleX(0.9216);transform-origin:0 0">Stop on next</div><div class="a" style="left:22px;top:348px;width:81px;height:22px;border:1px solid #2a9ce6;border-radius:3px;background:linear-gradient(#eaf6fd,#d9f0fc 50%,#bee6fd 50%,#a7d9f5);box-shadow:inset 0 0 0 1px #9ed8f8, 0 0 1px 0 #40b0f0"></div><div class="t" style="left:49.30px;top:352.84px;font-size:12px;line-height:12px;color:#000;letter-spacing:-0.468px;transform:scaleX(0.9000);transform-origin:0 0">Clear</div><div class="a" style="left:120px;top:317px;width:101px;height:50px;border:1px solid #d5dfe5;border-radius:3px"></div><div class="a" style="left:130px;top:312px;width:73px;height:14px;background:#fff"></div><svg class="a" style="left:132px;top:312px" width="13" height="13" viewBox="0 0 13 13"><rect x="0.5" y="0.5" width="12" height="12" fill="#f4f4f4" stroke="#8e8f8f"/><rect x="2.5" y="2.5" width="8" height="8" fill="#dcdcdc" stroke="#b4b4b4" stroke-width="0.6"/><path d="M3 6.5 L5.3 9.5 L10.5 2.5" fill="none" stroke="#3a4f9a" stroke-width="1.6"/></svg><div class="t" style="left:146.90px;top:312.84px;font-size:12px;line-height:12px;color:#000;letter-spacing:-0.290px;transform:scaleX(0.9000);transform-origin:0 0">Single color</div><div class="a" style="left:130px;top:336px;width:81px;height:22px;border:1px solid #707070;border-radius:3px;background:linear-gradient(#f2f2f2,#ebebeb 50%,#dddddd 50%,#cfcfcf);box-shadow:inset 0 0 0 1px #fcfcfc"></div><div class="t" style="left:139.00px;top:340.84px;font-size:12px;line-height:12px;color:#000;letter-spacing:0.000px;transform:scaleX(0.9025);transform-origin:0 0">Color by tool</div><div class="a" style="left:21px;top:418px;width:195px;height:65px;border:1px solid #d5dfe5;border-radius:3px"></div><div class="a" style="left:29px;top:412px;width:86px;height:12px;background:#fff"></div><div class="t" style="left:31.90px;top:412.84px;font-size:12px;line-height:12px;color:#000;letter-spacing:-0.198px;transform:scaleX(0.9000);transform-origin:0 0">Simulation speed</div><div class="a" style="left:28px;top:434px;width:181px;height:32px;border-top:2px solid #6a6a6a;border-left:2px solid #6a6a6a;border-right:1px solid #e3e3e3;border-bottom:1px solid #e3e3e3;background:#fff"></div><svg class="a" style="left:28px;top:441px" width="181" height="5"><rect x="15.0" y="0" width="1" height="4" fill="#a0a0a0"/><rect x="32.0" y="0" width="1" height="3" fill="#a0a0a0"/><rect x="49.0" y="0" width="1" height="3" fill="#a0a0a0"/><rect x="65.5" y="0" width="1" height="3" fill="#a0a0a0"/><rect x="82.0" y="0" width="1" height="3" fill="#a0a0a0"/><rect x="99.0" y="0" width="1" height="3" fill="#a0a0a0"/><rect x="116.0" y="0" width="1" height="3" fill="#a0a0a0"/><rect x="132.5" y="0" width="1" height="3" fill="#a0a0a0"/><rect x="149.0" y="0" width="1" height="3" fill="#a0a0a0"/><rect x="166.0" y="0" width="1" height="4" fill="#a0a0a0"/></svg><div class="a" style="left:42px;top:454px;width:157px;height:3px;background:#e7eaea;border:1px solid #babdbe;border-radius:1px"></div><svg class="a" style="left:37px;top:446px" width="12" height="18" viewBox="0 0 12 18"><path d="M1 5 L6 0.6 L11 5 V16.5 Q11 17.5 10 17.5 H2 Q1 17.5 1 16.5Z" fill="url(#thumb)" stroke="#6f6f6f" stroke-width="1"/><defs><linearGradient id="thumb" x1="0" y1="0" x2="0" y2="1"><stop offset="0" stop-color="#f3f3f3"/><stop offset="1" stop-color="#d0d0d0"/></linearGradient></defs></svg><svg class="a" style="left:30px;top:496px" width="180" height="18" viewBox="0 0 180 18"><rect x="3" y="1.6" width="1.6" height="11" fill="#000"/><rect x="6.4" y="1.6" width="1.6" height="11" fill="#000"/><path d="M9 1.6 L20 7.1 L9 12.6Z" fill="#000"/><path d="M36 2 L47 7.1 L36 12.2Z" fill="#000"/><rect x="69.5" y="4.5" width="2.5" height="5.5" fill="#bdbdbd"/><rect x="73.2" y="4.5" width="2.5" height="5.5" fill="#bdbdbd"/><path d="M97 1.8 L107 7.1 L97 12.4Z" fill="#000"/><rect x="107.3" y="1.8" width="2.2" height="10.6" fill="#000"/><path d="M128 1.8 L138.5 7.1 L128 12.4Z" fill="#000"/><rect x="139.8" y="1.8" width="1.3" height="11" fill="#000"/><rect x="142.5" y="1.8" width="1.3" height="11" fill="#000"/><path d="M161 9.4 L166.5 2 L172 9.4Z" fill="#000"/><rect x="161" y="11" width="11" height="2.2" fill="#000"/></svg><div class="a" style="left:1434px;top:-10px;width:237px;height:247px;border:1px solid #596166;border-radius:7px;background:linear-gradient(90deg,#eaf5fa,#f6fbfd 30%,#f2f9fc 70%,#eaf4f8);box-shadow:0 0 9px 1px rgba(0,0,0,0.28)"></div><div class="a" style="left:1664px;top:20px;width:6px;height:160px;background:linear-gradient(90deg,#dde8f0,#ffffff 45%,#ffffff 55%,#d0dce8),linear-gradient(#f4fafc,#dde8f2 20%,#dcefdc 35%,#ecf0dc 50%,#d8e4f6 65%,#e4ecf6 80%,#f4fafc);background-blend-mode:multiply"></div><div class="a" style="left:1441px;top:2px;width:223px;height:227px;background:#f0f0f0;border:1px solid #6b7075"></div><div class="a" style="left:1450px;top:5px;width:206px;height:215px;background:#fff;border:1px solid #828790"></div><div class="a" style="left:1451px;top:6px;width:204px;height:24px;background:linear-gradient(#ffffff 0%,#ffffff 45%,#f1f2f4 50%,#f1f2f4 100%);border-bottom:1px solid #d5d5d5"></div><div class="a" style="left:1545px;top:7px;width:1px;height:23px;background:#e3e4e6"></div><div class="a" style="left:1639px;top:7px;width:1px;height:23px;background:#e3e4e6"></div><div class="a" style="left:1451px;top:47px;width:204px;height:1px;background:#ececec"></div><div class="a" style="left:1451px;top:64px;width:204px;height:1px;background:#ececec"></div><div class="a" style="left:1451px;top:81px;width:204px;height:1px;background:#ececec"></div><div class="a" style="left:1451px;top:98px;width:204px;height:1px;background:#ececec"></div><div class="a" style="left:1451px;top:115px;width:204px;height:1px;background:#ececec"></div><div class="a" style="left:1451px;top:132px;width:204px;height:1px;background:#ececec"></div><div class="a" style="left:1451px;top:149px;width:204px;height:1px;background:#ececec"></div><div class="a" style="left:1451px;top:166px;width:204px;height:1px;background:#ececec"></div><div class="a" style="left:1451px;top:183px;width:204px;height:1px;background:#ececec"></div><div class="a" style="left:1451px;top:200px;width:204px;height:1px;background:#ececec"></div><div class="a" style="left:1451px;top:217px;width:204px;height:1px;background:#ececec"></div><div class="a" style="left:1545px;top:30px;width:2px;height:189px;background:#edf2f9"></div><div class="a" style="left:1639px;top:30px;width:2px;height:189px;background:#edf2f9"></div><svg class="a" style="left:1651px;top:219px" width="12" height="10" viewBox="0 0 12 10"><path d="M11 1 L2 10 M11 4 L5 10 M11 7 L8 10" stroke="#8a8a8a" stroke-width="1"/></svg><div class="t" style="left:1457.5px;top:13.69px;font-size:11px;line-height:11px;color:#000;transform:scaleX(0.9215);transform-origin:0 0;">Name</div><div class="t" style="left:1551.3px;top:13.69px;font-size:11px;line-height:11px;color:#000;transform:scaleX(0.9524);transform-origin:0 0;">Value</div><div class="t" style="left:1457.5px;top:34.69px;font-size:11px;line-height:11px;color:#000;">X</div><div class="t" style="left:1553.8px;top:34.69px;font-size:11px;line-height:11px;color:#000;">63.095</div><div class="t" style="left:1457.5px;top:51.69px;font-size:11px;line-height:11px;color:#000;">Y</div><div class="t" style="left:1553.8px;top:51.69px;font-size:11px;line-height:11px;color:#000;">25.000</div><div class="t" style="left:1457.5px;top:68.69px;font-size:11px;line-height:11px;color:#000;">Z</div><div class="t" style="left:1553.8px;top:68.69px;font-size:11px;line-height:11px;color:#000;">2.000</div><div class="t" style="left:1459.0px;top:85.69px;font-size:11px;line-height:11px;color:#000;">-</div><div class="t" style="left:1554.6px;top:85.69px;font-size:11px;line-height:11px;color:#000;">-</div><div class="t" style="left:1459.0px;top:102.69px;font-size:11px;line-height:11px;color:#000;">-</div><div class="t" style="left:1554.6px;top:102.69px;font-size:11px;line-height:11px;color:#000;">-</div><div class="t" style="left:1457.5px;top:119.69px;font-size:11px;line-height:11px;color:#000;transform:scaleX(0.9562);transform-origin:0 0;">Feed</div><div class="t" style="left:1553.8px;top:119.69px;font-size:11px;line-height:11px;color:#000;">800.000</div><div class="t" style="left:1457.5px;top:136.69px;font-size:11px;line-height:11px;color:#000;transform:scaleX(0.9091);transform-origin:0 0;">Spin</div><div class="t" style="left:1553.8px;top:136.69px;font-size:11px;line-height:11px;color:#000;">11500.000</div><div class="t" style="left:1457.5px;top:153.69px;font-size:11px;line-height:11px;color:#000;transform:scaleX(0.9602);transform-origin:0 0;">Step</div><div class="t" style="left:1553.8px;top:153.69px;font-size:11px;line-height:11px;color:#000;">23</div><div class="t" style="left:1457.5px;top:170.69px;font-size:11px;line-height:11px;color:#000;transform:scaleX(0.9042);transform-origin:0 0;">Time</div><div class="t" style="left:1559.5px;top:170.69px;font-size:11px;line-height:11px;color:#000;">0:00:44</div><div class="a" style="left:1670px;top:0px;width:12px;height:38px;background:linear-gradient(90deg,#f4f4f4,#e4e4e4)"></div><div class="a" style="left:1678px;top:0px;width:4px;height:38px;background:#f8f8f8"></div><div class="a" style="left:1682px;top:0px;width:1px;height:880px;background:#4a5258"></div><div class="a" style="left:1671px;top:38px;width:12px;height:24px;background:linear-gradient(90deg,#b8b8b8,#b8b8b8 70%,#a8a8a8);border-top:2px solid #2e2e2e;box-shadow:inset 0 1px 0 #d8d8d8"></div><div class="a" style="left:1671px;top:62px;width:12px;height:24px;background:linear-gradient(90deg,#b8b8b8,#b8b8b8 70%,#a8a8a8);border-top:2px solid #2e2e2e;box-shadow:inset 0 1px 0 #d8d8d8"></div><div class="a" style="left:1671px;top:86px;width:12px;height:24px;background:linear-gradient(90deg,#b8b8b8,#b8b8b8 70%,#a8a8a8);border-top:2px solid #2e2e2e;box-shadow:inset 0 1px 0 #d8d8d8"></div><div class="a" style="left:1671px;top:110px;width:12px;height:24px;background:linear-gradient(90deg,#b8b8b8,#b8b8b8 70%,#a8a8a8);border-top:2px solid #2e2e2e;box-shadow:inset 0 1px 0 #d8d8d8"></div><div class="a" style="left:1671px;top:134px;width:12px;height:24px;background:linear-gradient(90deg,#e4e4e4,#e4e4e4 70%,#a8a8a8);border-top:2px solid #2e2e2e;box-shadow:inset 0 1px 0 #d8d8d8"></div><div class="a" style="left:1671px;top:158px;width:12px;height:24px;background:linear-gradient(90deg,#b8b8b8,#b8b8b8 70%,#a8a8a8);border-top:2px solid #2e2e2e;box-shadow:inset 0 1px 0 #d8d8d8"></div><div class="a" style="left:1671px;top:181px;width:12px;height:2px;background:#2e2e2e"></div><svg class="a" style="left:1670px;top:38px" width="13" height="144" viewBox="0 0 13 144"><path d="M1.5 8 V20 H8.5 V8Z" fill="#f4e8a0" stroke="#202020" stroke-width="0.8"/><rect x="2" y="12" width="2.5" height="7" fill="#d8b020"/><path d="M0.5 8.5 L5 4 L9.5 9" fill="none" stroke="#e8a800" stroke-width="1.6"/><rect x="6.2" y="4" width="2.2" height="4" fill="#c81818"/><rect x="1" y="31" width="2" height="14" fill="#20a020"/><rect x="2.5" y="29" width="3.5" height="16" fill="#f0c820" stroke="#806010" stroke-width="0.5"/><path d="M6 28 L8 26 L10 28 V45 H6Z" fill="#6a98e0" stroke="#203c90" stroke-width="0.8"/><path d="M0.5 55 H9 L11 58 L8.5 65 H1Z" fill="#f8e070" stroke="#c87810" stroke-width="1"/><rect x="0.5" y="75" width="9" height="11" fill="#e8eef8" stroke="#2a3a70" stroke-width="0.8"/><rect x="1.5" y="77" width="2" height="2" fill="#f0d020"/><rect x="1.5" y="81.5" width="2" height="2" fill="#f0d020"/><rect x="5" y="77" width="3" height="1.6" fill="#f8e020"/><rect x="5" y="81" width="3.5" height="1.2" fill="#3060c0"/><rect x="4.8" y="83" width="4" height="2" fill="#fff" stroke="#2a3a70" stroke-width="0.4"/><rect x="0.8" y="88" width="1.5" height="1.5" fill="#2020c0"/><circle cx="4.5" cy="107" r="6.3" fill="#e02020"/><path d="M4.5 107 L-1.8 107 A6.3 6.3 0 0 0 3 113.2Z" fill="#20a020"/><path d="M4.5 107 L3 113.2 A6.3 6.3 0 0 0 10.8 107Z" fill="#e8b000"/><path d="M4.5 107 V100.7 A6.3 6.3 0 0 0 -1.8 107Z" fill="#2060d0"/><ellipse cx="6" cy="115" rx="5" ry="1.2" fill="rgba(0,0,0,0.25)"/><rect x="1" y="127" width="8" height="11" fill="#e0e0e0" stroke="#404040" stroke-width="0.8"/><path d="M2.5 130 H7.5 M2.5 132.5 H7.5 M2.5 135 H7.5" stroke="#909090" stroke-width="0.7"/><path d="M0 125 Q5 121 11 123 V126 H2Z" fill="#d8a060"/><path d="M0.5 124 L3 127 M2 123.5 L4 126" stroke="#603010" stroke-width="0.6"/></svg></body></html>
